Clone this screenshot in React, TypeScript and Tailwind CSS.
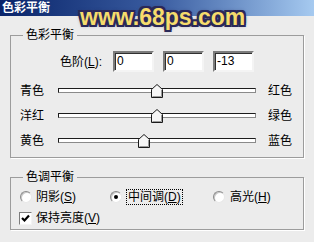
import React from "react";

const font = "font-['Liberation_Sans','Noto_Sans_CJK_SC',sans-serif]";

function Sunken({ value }: { value: string }) {
  return (
    <div className="w-[41px] h-[21px] bg-white border-2 border-t-[#7c7c7c] border-l-[#7c7c7c] border-b-[#f4f4f4] border-r-[#f4f4f4] shadow-[inset_1px_1px_0_#303030] pl-[2px] text-[12px] leading-[17px] text-black">
      {value}
    </div>
  );
}

function Slider({ left, right, pos }: { left: string; right: string; pos: number }) {
  return (
    <div className="h-[25px] flex items-center">
      <span className="ml-[9px] w-[24px] text-[12px] leading-[14px]">{left}</span>
      <div className="relative ml-[14px] w-[198px] h-[5px] bg-white border border-[#1c1c1c] border-b-[#8a8a8a] border-r-[#8a8a8a]">
        <svg
          className="absolute top-[-5px]"
          style={{ left: `calc(${pos}% - 6px)` }}
          width="12"
          height="14"
          viewBox="0 0 12 14"
        >
          <polygon points="6,0.5 11.5,5.5 11.5,13.5 0.5,13.5 0.5,5.5" fill="#f6f6f6" stroke="#1a1a1a" strokeWidth="1" />
          <polyline points="1.5,12.5 10.5,12.5 10.5,6" fill="none" stroke="#9a9a9a" strokeWidth="1" />
        </svg>
      </div>
      <span className="ml-[12px] text-[12px] leading-[14px]">{right}</span>
    </div>
  );
}

function Radio({ checked }: { checked?: boolean }) {
  return (
    <span className="w-[12px] h-[12px] rounded-full bg-white border border-t-[#8a8a8a] border-l-[#8a8a8a] border-b-[#e8e8e8] border-r-[#e8e8e8] shadow-[inset_1px_1px_0_#c8c8c8] flex items-center justify-center">
      {checked && <span className="w-[4px] h-[4px] rounded-full bg-black" />}
    </span>
  );
}

export default function App() {
  return (
    <div className={`relative w-[314px] h-[242px] overflow-hidden bg-[#ececec] text-black ${font}`}>
      <div className="h-[16px] bg-gradient-to-r from-[#0a246a] via-[#3a5ca0] to-[#a6caf0] pl-[2px] text-white text-[12px] font-bold leading-[16px]">
        色彩平衡
      </div>

      <fieldset className="mt-[12px] mx-[10px] border border-[#9c9c9c] shadow-[1px_1px_0_#ffffff] pb-[4px]">
        <legend className="ml-[12px] px-[3px] text-[12px] leading-[14px]">色彩平衡</legend>
        <div className="mt-[9px] flex items-center">
          <span className="ml-[49px] w-[53px] text-[12px] leading-[14px]">
            色阶(<span className="underline">L</span>):
          </span>
          <div className="flex gap-[9px]">
            <Sunken value="0" />
            <Sunken value="0" />
            <Sunken value="-13" />
          </div>
        </div>
        <div className="mt-[6px]">
          <Slider left="青色" right="红色" pos={50} />
          <Slider left="洋红" right="绿色" pos={50} />
          <Slider left="黄色" right="蓝色" pos={43.5} />
        </div>
      </fieldset>

      <fieldset className="mt-[12px] mx-[10px] border border-[#9c9c9c] shadow-[1px_1px_0_#ffffff] pb-[3px]">
        <legend className="ml-[12px] px-[3px] text-[12px] leading-[14px]">色调平衡</legend>
        <div className="mt-[5px] h-[16px] flex items-center text-[12px] leading-[14px]">
          <div className="ml-[9px] w-[90px] flex items-center gap-[4px]">
            <Radio />
            <span>
              阴影(<span className="underline">S</span>)
            </span>
          </div>
          <div className="w-[103px] flex items-center gap-[4px]">
            <Radio checked />
            <span className="border border-dotted border-black px-[1px]">
              中间调(<span className="underline">D</span>)
            </span>
          </div>
          <div className="flex items-center gap-[5px]">
            <Radio />
            <span>
              高光(<span className="underline">H</span>)
            </span>
          </div>
        </div>
        <div className="mt-[5px] h-[16px] flex items-center text-[12px] leading-[14px]">
          <span className="ml-[8px] w-[13px] h-[13px] bg-white border border-t-[#7c7c7c] border-l-[#7c7c7c] border-b-[#f4f4f4] border-r-[#f4f4f4] flex items-center justify-center">
            <svg width="9" height="9" viewBox="0 0 9 9">
              <polyline points="1,4 3.5,6.5 8,1.5" fill="none" stroke="#000" strokeWidth="2.2" />
            </svg>
          </span>
          <span className="ml-[4px]">
            保持亮度(<span className="underline">V</span>)
          </span>
        </div>
      </fieldset>

      <div className="absolute left-[80px] top-[4px] text-[23px] font-bold leading-[26px] text-[#f6dc6c] font-['Liberation_Sans',sans-serif] [text-shadow:2px_0_0_#2a2858,-2px_0_0_#2a2858,0_2px_0_#2a2858,0_-2px_0_#2a2858,2px_2px_0_#2a2858,-2px_-2px_0_#2a2858,2px_-2px_0_#2a2858,-2px_2px_0_#2a2858,0_0_4px_#2a2858]">
        www.68ps.com
      </div>
    </div>
  );
}
